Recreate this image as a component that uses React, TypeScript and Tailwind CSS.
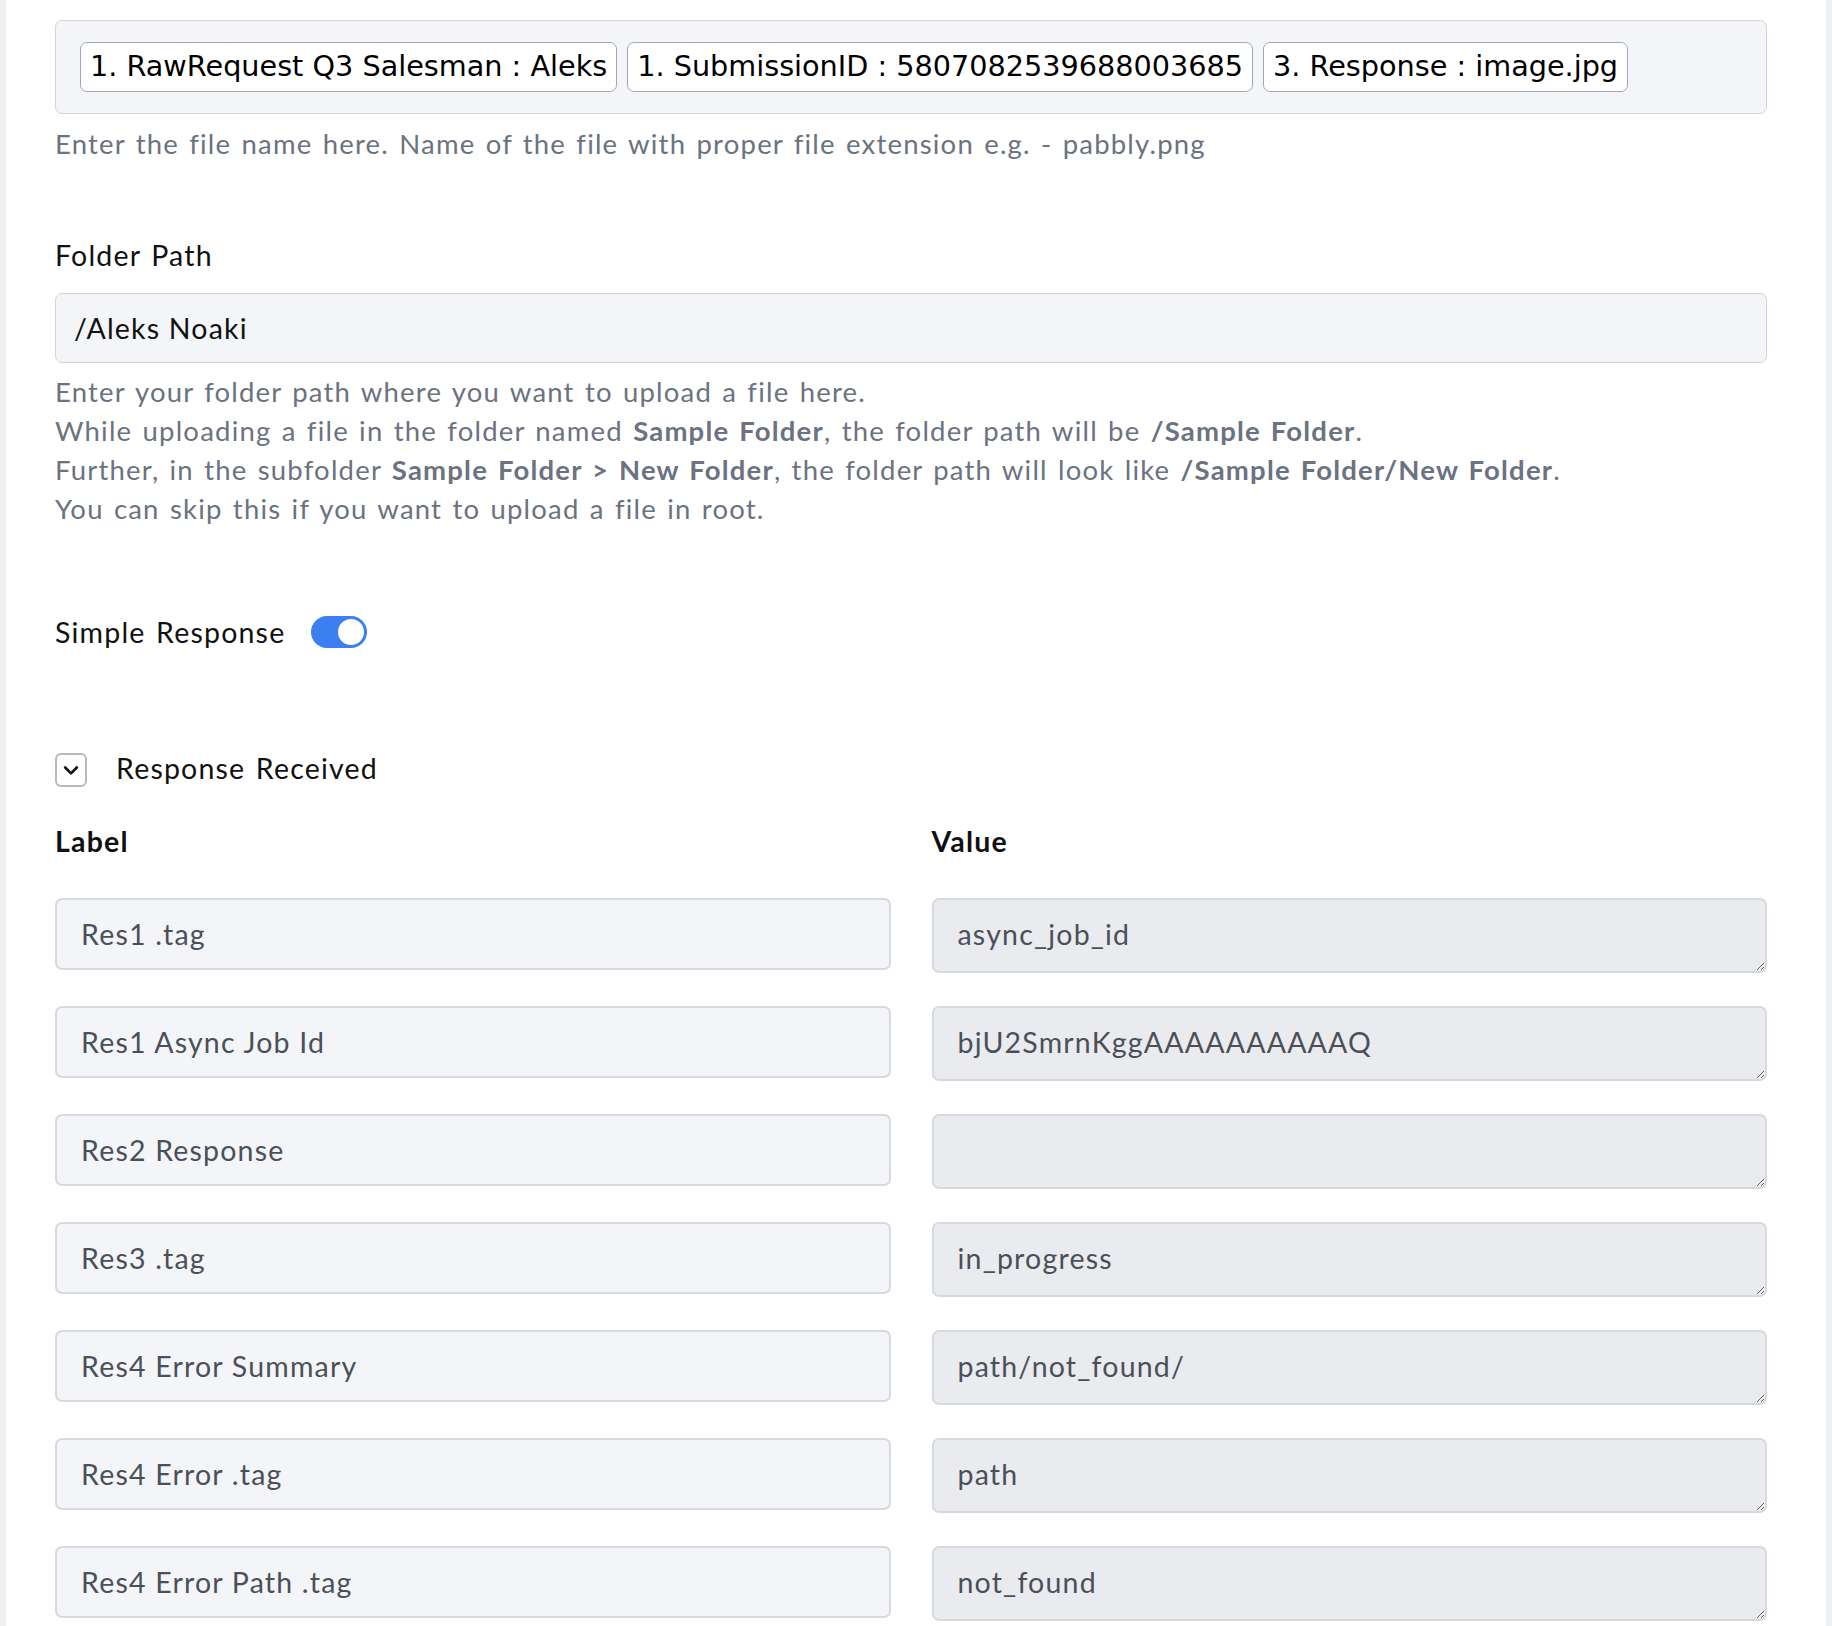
import { useState } from "react"

const chips = [
  "1. RawRequest Q3 Salesman : Aleks",
  "1. SubmissionID : 5807082539688003685",
  "3. Response : image.jpg",
]

const responseRows = [
  { label: "Res1 .tag", value: "async_job_id" },
  { label: "Res1 Async Job Id", value: "bjU2SmrnKggAAAAAAAAAAQ" },
  { label: "Res2 Response", value: "" },
  { label: "Res3 .tag", value: "in_progress" },
  { label: "Res4 Error Summary", value: "path/not_found/" },
  { label: "Res4 Error .tag", value: "path" },
  { label: "Res4 Error Path .tag", value: "not_found" },
]

const Toggle = ({ on, onChange }: { on: boolean; onChange: (v: boolean) => void }) => {
  return (
    <button
      type="button"
      onClick={() => onChange(!on)}
      className={
        on
          ? "flex h-[32px] w-[56px] items-center justify-end rounded-full bg-[#3b7ff3] px-[3px]"
          : "flex h-[32px] w-[56px] items-center justify-start rounded-full bg-[#d1d5db] px-[3px]"
      }
    >
      <span className="block h-[26px] w-[26px] rounded-full bg-white" />
    </button>
  )
}

export default function App() {
  const [simple, setSimple] = useState(true)
  const [open, setOpen] = useState(true)

  return (
    <div
      className="min-h-screen bg-[#eef0f4] px-[6px] tracking-[1.2px] [word-spacing:2px]"
      style={{ fontFamily: "Lato, 'Noto Sans', sans-serif" }}
    >
      <div className="min-h-screen bg-white pl-[49px] pr-[59px] pt-[20px] pb-[40px]">
        {/* file name mapping */}
        <div className="flex h-[94px] items-center gap-[10px] rounded-[7px] border border-[#d1d5db] bg-[#f3f5f8] px-[24px]">
          {chips.map((c) => (
            <span
              key={c}
              className="flex h-[50px] items-center rounded-[7px] border border-[#a3a8b0] bg-white px-[9px] text-[28.7px] tracking-normal text-black [word-spacing:0px]"
              style={{ fontFamily: "'DejaVu Sans', Verdana, sans-serif" }}
            >
              {c}
            </span>
          ))}
        </div>
        <p className="mt-[10px] text-[27.5px] leading-[39px] text-[#6b7280]">
          Enter the file name here. Name of the file with proper file extension e.g. - pabbly.png
        </p>

        {/* folder path */}
        <label className="mt-[73px] block text-[28.5px] leading-[39px] text-[#111]">Folder Path</label>
        <input
          readOnly
          value="/Aleks Noaki"
          className="mt-[18px] h-[70px] w-full rounded-[7px] border border-[#d1d5db] bg-[#f3f5f8] px-[18px] text-[28.5px] text-[#111] outline-none"
        />
        <div className="mt-[9px] text-[27.5px] leading-[39px] text-[#6b7280]">
          <p>Enter your folder path where you want to upload a file here.</p>
          <p>
            While uploading a file in the folder named <b>Sample Folder</b>, the folder path will be{" "}
            <b>/Sample Folder</b>.
          </p>
          <p>
            Further, in the subfolder <b>Sample Folder &gt; New Folder</b>, the folder path will look like{" "}
            <b>/Sample Folder/New Folder</b>.
          </p>
          <p>You can skip this if you want to upload a file in root.</p>
        </div>

        {/* simple response switch */}
        <div className="mt-[88px] flex h-[32px] items-center gap-[26px]">
          <span className="text-[28.5px] text-[#111]">Simple Response</span>
          <Toggle on={simple} onChange={setSimple} />
        </div>

        {/* response received */}
        <div className="mt-[105px] flex h-[34px] items-center gap-[29px]">
          <button
            type="button"
            onClick={() => setOpen(!open)}
            className="flex h-[34px] w-[32px] items-center justify-center rounded-[6px] border-2 border-[#b5bac2] bg-white"
          >
            <svg width="20" height="20" viewBox="0 0 24 24" fill="none" stroke="#111" strokeWidth="3.2" strokeLinecap="round" strokeLinejoin="round">
              <path d={open ? "M5 9l7 7 7-7" : "M9 5l7 7-7 7"} />
            </svg>
          </button>
          <span className="-mt-[4px] text-[28.5px] text-[#111]">Response Received</span>
        </div>

        {open && (
          <div className="grid grid-cols-2 gap-x-[41px]">
            <div className="mt-[35px] text-[28.5px] font-bold leading-[39px] text-[#111]">Label</div>
            <div className="mt-[35px] text-[28.5px] font-bold leading-[39px] text-[#111]">Value</div>
            <div className="col-span-2 mt-[37px] grid grid-cols-2 gap-x-[41px] gap-y-[33px]">
              {responseRows.map((r) => (
                <div key={r.label} className="contents">
                  <input
                    readOnly
                    value={r.label}
                    className="h-[72px] w-full rounded-[7px] border-2 border-[#d6d9de] bg-[#f3f5f8] px-[24px] text-[28.5px] text-[#4b5058] outline-none"
                  />
                  <textarea
                    readOnly
                    defaultValue={r.value}
                    className="block h-[75px] w-full resize-y rounded-[7px] border-2 border-[#d6d9de] bg-[#e9ebef] px-[24px] pt-[15px] text-[28.5px] leading-[39px] text-[#4b5058] outline-none"
                  />
                </div>
              ))}
            </div>
          </div>
        )}
      </div>
    </div>
  )
}
